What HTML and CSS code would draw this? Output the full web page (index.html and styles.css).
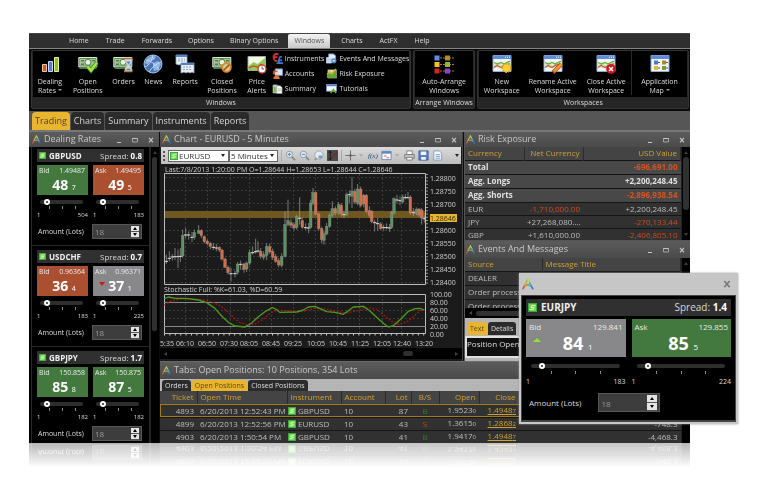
FILE: index.html
```html
<!DOCTYPE html>
<html lang="en">
<head>
<meta charset="utf-8">
<title>Trading workspace</title>
<link rel="stylesheet" href="styles.css">
</head>
<body>
<svg class="sprite" aria-hidden="true">
  <symbol id="logo" viewBox="0 0 10 10"><g fill="none" stroke-width="1.3" stroke-linecap="round"><path stroke="#d9534a" d="M.8 9l1.5-3"/><path stroke="#e9a33a" d="M2.3 6l1-2"/><path stroke="#9bc53d" d="M3.3 4L4.8 1"/><path stroke="#c8cf4a" d="M4.8 1l1.7 3"/><path stroke="#44a5d8" d="M6.5 4l1.2 2.5"/><path stroke="#5166c9" d="M7.7 6.5L9 9"/><path stroke="#cf8a3c" d="M2.5 6.4L5 5.6"/><path stroke="#46b5a5" d="M5 5.6l2.4 1"/></g></symbol>
  <symbol id="chip" viewBox="0 0 9 9"><path fill="#36a833" d="M0 0h9v9H0z"/><path fill="#6fd64e" d="M1 1h7v7H1z"/><path fill="none" stroke="#e9ffe0" stroke-width=".9" d="M7.500 2.500H3.800L3 4.500h3L5.200 6.500H1.500"/></symbol>
  <symbol id="min" viewBox="0 0 6 6"><path fill="none" stroke="currentColor" d="M1 5.500h4"/></symbol>
  <symbol id="max" viewBox="0 0 6 6"><path fill="none" stroke="currentColor" stroke-width=".7" d="M.5 1.500h5v3.500h-5z"/><path stroke="currentColor" d="M.5 1.500h5"/></symbol>
  <symbol id="x" viewBox="0 0 6 6"><path fill="none" stroke="currentColor" stroke-width="1.2" d="M1 .8l4 4.600M5 .8L1 5.400"/></symbol>
  <symbol id="bars" viewBox="0 0 20 20"><path fill="#d8532a" stroke="#f7c4a8" d="M2.500 10.500h4v7h-4z"/><path fill="#4d7fd6" stroke="#c9dcff" d="M8.500 7.500h4v10h-4z"/><path fill="#8fc21e" stroke="#e4f5a0" d="M14.500 3.500h4v14h-4z"/></symbol>
  <symbol id="money" viewBox="0 0 20 20"><path fill="#5d8f55" stroke="#dfe9d6" d="M.8 3.500h18v9.500H.8z"/><path fill="#a8c79c" d="M2 5h15.600v6.600H2z"/><circle cx="10" cy="8.300" r="3" fill="#e8f2df" stroke="#4d7d48"/><path fill="#4d7d48" d="M3 6h3v1.500H3zM14 6h3v1.500h-3zM3 9.500h3V11H3zM1.500 13.500h17V15h-17z"/></symbol>
  <symbol id="check" viewBox="0 0 20 20"><use href="#money"/><path fill="none" stroke="#38861a" stroke-width="4" d="M9.500 12.500l3.500 4 6-8"/><path fill="none" stroke="#9bea3c" stroke-width="2.600" d="M9.500 12.500l3.500 4 6-8"/></symbol>
  <symbol id="hour" viewBox="0 0 20 20"><use href="#money"/><path fill="#bcdcf5" stroke="#e9c489" d="M12 5h7c0 4-2.500 5-2.500 6s2.500 2 2.500 6h-7c0-4 2.500-5 2.500-6S12 9 12 5z"/><path fill="#4a88cc" d="M13.500 7.500h4l-2 3zM13 16c1-2 4-2 5 0z"/><path stroke="#b9733a" stroke-width="1.600" d="M11 4.500h8.500M11 17.500h8.500"/></symbol>
  <symbol id="globe" viewBox="0 0 20 20"><circle cx="10" cy="10" r="9" fill="#4774b5" stroke="#a9c6ec"/><path fill="#8db4e2" d="M4 5c2-3 7-4 9-2l-2 3-4 1-2 4-3-2zM10 9l5-2 3 3-3 6-4 1-1-4z"/><path fill="none" stroke="#d4e5f8" stroke-width=".8" d="M2 13C7 11 9 6 10 1M6 18c3-5 7-8 12-10M3 6c5 1 11 5 13 10"/></symbol>
  <symbol id="reports" viewBox="0 0 20 20"><path fill="#e8eff8" stroke="#93aac6" stroke-width=".8" d="M1 1h11v10l-2-1-2 1-2-1-2 1-3-1z"/><path fill="#4c84c8" d="M1 1h11v2H1z"/><path fill="#e8eff8" stroke="#93aac6" stroke-width=".8" d="M6 9h13v10l-2-1-2 1-2-1-2 1-2-1-3 1z"/><path fill="#4c84c8" d="M6 9h13v2H6z"/><path stroke="#7c8ba0" stroke-width=".8" stroke-dasharray="2 1" d="M3 5h7M3 7h7M8 13h9M8 15.500h9"/></symbol>
  <symbol id="closed" viewBox="0 0 20 20"><use href="#money"/><circle cx="14.500" cy="13.500" r="4.300" fill="#d6c6a0" stroke="#e38818" stroke-width="1.800"/><path stroke="#8f5a18" stroke-width="1.600" d="M11.500 16.500l6-6"/></symbol>
  <symbol id="alerts" viewBox="0 0 20 20"><path fill="#f3fae8" stroke="#9dad92" d="M1 2.500h17.500v14H1z"/><path fill="#91cc59" d="M1.500 12l5-4 4 2 7.500-6v12H1.500z"/><path fill="none" stroke="#d23a25" stroke-width="1.200" d="M1.500 14l5-2 4 1 4-3"/><circle cx="15" cy="15" r="4" fill="#fff" stroke="#d1442b" stroke-width="1.300"/><path fill="none" stroke="#333" stroke-width=".8" d="M15 12.500V15h2"/></symbol>
  <symbol id="instr" viewBox="0 0 12 12"><path fill="none" stroke="#d33620" stroke-width="2" d="M7 1.500C3 0 1 3 2 6s3 3 4 2.500M1 4.500h5"/><path fill="none" stroke="#3f78d2" stroke-width="1.800" d="M11 4.500c-2-1-3 0-3 2s0 3-1.500 4.500H12M6.500 8H11"/></symbol>
  <symbol id="acct" viewBox="0 0 12 12"><path fill="#dbe6f6" stroke="#7896bf" d="M3.500 1h8v7h-8z"/><path fill="#db4a2b" d="M1 3h5v4H1z"/><circle cx="5" cy="6" r="2" fill="#f4d2a2"/><path fill="#e07130" d="M1.500 12c0-5 7-5 7 0z"/></symbol>
  <symbol id="summ" viewBox="0 0 12 12"><path fill="#d5dbe0" stroke="#777" stroke-width=".7" d="M1 2h5v9H1z"/><path fill="#fafafa" stroke="#8c9a8c" stroke-width=".7" d="M5 3h4l2 2v6.500H5z"/><path fill="#6bb43a" d="M2 4h2v6H2z"/><path stroke="#999" stroke-width=".7" d="M6 6.500h4M6 8.500h4"/></symbol>
  <symbol id="evt" viewBox="0 0 12 12"><path fill="#e9f0f7" stroke="#6d9cce" d="M3 1h5l2.500 2v6H3z"/><path fill="#b7d4f0" stroke="#eef" stroke-width=".7" d="M.5 5h7v4.500L6 11H.5z"/><circle cx="8.500" cy="8.500" r="2.800" fill="#4e8fd0"/><path stroke="#fff" d="M7 8.500h3"/></symbol>
  <symbol id="risk" viewBox="0 0 12 12"><path fill="#e7efc2" stroke="#7f9a49" stroke-width=".7" d="M2 2h9.500v9H2z"/><path fill="#67a531" d="M1 11V8l3-3 2 2 5-5v9z"/><path fill="none" stroke="#e4a72a" stroke-width="1.300" d="M1 7l3-3 2 2 5-5"/></symbol>
  <symbol id="tut" viewBox="0 0 12 12"><path fill="#f5f8fc" stroke="#7893c5" stroke-width=".8" d="M.5 1.500h11v7.500H.5z"/><path fill="#5c83cf" d="M.5 1.500h11v2H.5z"/><path fill="none" stroke="#66b32e" stroke-width="1.600" d="M5 11l3-4 3 4"/></symbol>
  <symbol id="arrange" viewBox="0 0 20 20"><path stroke="#b5762b" stroke-dasharray="2 1" d="M6 4h14M6 10.500h14M6 17h14"/><path fill="#5a8ff0" d="M.5 1.500h5v5h-5z"/><path fill="#b38a24" d="M11 1.500h5v5h-5z"/><path fill="#f0c223" d="M.5 8h5v5h-5z"/><path fill="#8dbd22" d="M11 8h5v5h-5z"/><path fill="#d62222" d="M.5 14.500h5v5h-5z"/><path fill="#8b3fe0" d="M11 14.500h5v5h-5z"/></symbol>
  <symbol id="win" viewBox="0 0 20 20"><path fill="#f2f6ef" stroke="#8da9d8" d="M1 1.500h18v16H1z"/><path fill="#5d8cd8" d="M1 1.500h18v3.500H1z"/><path stroke="#fff" d="M13 3.200h1M15 3.200h1M17 3.200h1"/><path fill="#cfe8b4" d="M1.500 11l4-3 4 3 4-2 5-2v4l-9 3-8-1z"/><path fill="none" stroke="#5ca83a" stroke-width="1.200" d="M2 8.500l3.500 1.500L9 8.500l3 1.500 6-3"/><path fill="none" stroke="#d1553b" stroke-width="1.300" d="M2 13.500l3-2 4 2 4-2.500 5-1"/></symbol>
  <symbol id="wnew" viewBox="0 0 20 20"><use href="#win"/><circle cx="14.500" cy="14" r="4.300" fill="#f9d33c" stroke="#d99d16" stroke-width="1.500" stroke-dasharray="2 1"/></symbol>
  <symbol id="wren" viewBox="0 0 20 20"><use href="#win"/><path stroke="#a5501a" stroke-width="4" d="M10 18.500l8.500-8.500"/><path stroke="#f39a2e" stroke-width="2.500" d="M11 17.500l7.500-7.500"/></symbol>
  <symbol id="wclose" viewBox="0 0 20 20"><use href="#win"/><circle cx="15" cy="15" r="4.800" fill="#c9151b"/><path stroke="#fff" stroke-width="1.500" d="M13 13l4 4m0-4l-4 4"/></symbol>
  <symbol id="wmap" viewBox="0 0 20 20"><path fill="#f2f6fb" stroke="#8da9d8" d="M1 1.500h18v16H1z"/><path fill="#5d8cd8" d="M1 1.500h18v3.500H1z"/><path stroke="#555" d="M8 8.500h2M16 8.500h2M8 14h2M16 14h2"/><path fill="#4d79c9" d="M4 6.500h4v4H4z"/><path fill="#a98a2a" d="M12 6.500h4v4h-4z"/><path fill="#e9bb28" d="M4 12h4v4H4z"/><path fill="#7e9f2a" d="M12 12h4v4h-4z"/></symbol>
  <symbol id="zoomi" viewBox="0 0 12 12"><path stroke="#8a8a8a" stroke-width="2" d="M7 7l4 4"/><circle cx="4.800" cy="4.800" r="3.500" fill="#dbe8f3" stroke="#8f9aa5"/><path stroke="#4b86bd" d="M3 4.800h3.600M4.800 3v3.600"/></symbol>
  <symbol id="zoomo" viewBox="0 0 12 12"><path stroke="#8a8a8a" stroke-width="2" d="M7 7l4 4"/><circle cx="4.800" cy="4.800" r="3.500" fill="#dbe8f3" stroke="#8f9aa5"/><path stroke="#4b86bd" d="M3 4.800h3.600"/></symbol>
  <symbol id="page" viewBox="0 0 12 12"><path fill="#f5f9ff" stroke="#7d9dc0" d="M2 1h6l2.500 2.500V11H2z"/><path stroke="#6fa3d8" d="M4 5h5M4 7h5M4 9h5"/></symbol>
  <symbol id="globe2" viewBox="0 0 12 12"><circle cx="6.500" cy="5.500" r="4.500" fill="#e6edf2" stroke="#99a1a9"/><path fill="#6d9cc4" d="M6 6h4v3H6z"/><path stroke="#888" stroke-width="1.500" d="M4 9l-2 2"/></symbol>
  <symbol id="trend" viewBox="0 0 12 12"><path fill="#4a4a4a" d="M0 0h12v12H0z"/><path fill="none" stroke="#111" d="M3.500 1.500v9M2 3l1.500-1.800L5 3M2 9l1.500 1.800L5 9"/><path fill="none" stroke="#7a2525" stroke-width="1.300" d="M5 9l2-3 2-1 2-3"/></symbol>
  <symbol id="cross" viewBox="0 0 12 12"><path stroke="#666" d="M6 .5v11M.5 6h11"/><circle cx="6" cy="6" r="1.500" fill="#666"/></symbol>
  <symbol id="cal" viewBox="0 0 12 12"><path fill="#fff" stroke="#5d87c4" d="M1 1.500h10v9H1z"/><path fill="#5d87c4" d="M1 1.500h10V4H1z"/><path stroke="#c55" d="M3 6.500h3M6 8.500h3"/></symbol>
  <symbol id="print" viewBox="0 0 12 12"><path fill="#fff" stroke="#777" d="M3 1h6v4H3z"/><path fill="#c9c9c9" stroke="#777" d="M.8 5h10.400v4H.8z"/><path fill="#fff" stroke="#777" d="M3 8h6v3H3z"/></symbol>
  <symbol id="save" viewBox="0 0 12 12"><path fill="#5b7fbd" stroke="#3e5f9c" d="M1 1h10v10H1z"/><path fill="#f0f4fa" d="M3 1.500h6v4H3zM3.500 7.500h5v3h-5z"/></symbol>
</svg>

<main class="app">
  <nav class="menu">
    <a href="#">Home</a><a href="#">Trade</a><a href="#">Forwards</a><a href="#">Options</a><a href="#">Binary Options</a><a href="#" class="on">Windows</a><a href="#">Charts</a><a href="#">ActFX</a><a href="#">Help</a>
  </nav>
  <div class="ribbon">
    <section class="group g-windows">
      <div class="tools">
        <button><svg><use href="#bars"/></svg>Dealing<br>Rates <i class="caret"></i></button>
        <button><svg><use href="#check"/></svg>Open<br>Positions</button>
        <button><svg><use href="#hour"/></svg>Orders</button>
        <button><svg><use href="#globe"/></svg>News</button>
        <button><svg><use href="#reports"/></svg>Reports</button>
        <button><svg><use href="#closed"/></svg>Closed<br>Positions</button>
        <button><svg><use href="#alerts"/></svg>Price<br>Alerts</button>
        <div class="list">
          <button><svg><use href="#instr"/></svg>Instruments</button>
          <button><svg><use href="#acct"/></svg>Accounts</button>
          <button><svg><use href="#summ"/></svg>Summary</button>
        </div>
        <div class="list">
          <button><svg><use href="#evt"/></svg>Events And Messages</button>
          <button><svg><use href="#risk"/></svg>Risk Exposure</button>
          <button><svg><use href="#tut"/></svg>Tutorials</button>
        </div>
      </div>
      <h2>Windows</h2>
    </section>
    <section class="group g-arrange">
      <div class="tools"><button><svg><use href="#arrange"/></svg>Auto-Arrange<br>Windows</button></div>
      <h2>Arrange Windows</h2>
    </section>
    <section class="group g-spaces">
      <div class="tools">
        <button><svg><use href="#wnew"/></svg>New<br>Workspace</button>
        <button><svg><use href="#wren"/></svg>Rename Active<br>Workspace</button>
        <button><svg><use href="#wclose"/></svg>Close Active<br>Workspace</button>
        <button class="split"><svg><use href="#wmap"/></svg>Application<br>Map <i class="caret"></i></button>
      </div>
      <h2>Workspaces</h2>
    </section>
  </div>
  <nav class="spaces">
    <a href="#" class="on">Trading</a><a href="#">Charts</a><a href="#">Summary</a><a href="#">Instruments</a><a href="#">Reports</a>
  </nav>

  <div class="desk">
    <section class="panel rates">
      <header class="bar"><svg class="logo"><use href="#logo"/></svg><h3>Dealing Rates</h3><button aria-label="Minimize"><svg><use href="#min"/></svg></button><button aria-label="Maximize"><svg><use href="#max"/></svg></button><button aria-label="Close"><svg><use href="#x"/></svg></button></header>
      <div class="scroller">
        <div class="cards">
          <article class="card">
            <div class="pair"><svg><use href="#chip"/></svg><b>GBPUSD</b><span>Spread: <b>0.8</b></span></div>
            <div class="sides">
              <button class="quote up"><span>Bid</span><span>1.49487</span><strong>48 <small>7</small></strong></button>
              <button class="quote down"><span>Ask</span><span>1.49495</span><strong>49 <small>5</small></strong></button>
              <div class="slide"><input type="range" min="0" max="100" value="12" aria-label="GBPUSD bid size"><div class="ticks"><i></i><i></i><i></i></div><p><span>1</span><span>504</span></p></div>
              <div class="slide"><input type="range" min="0" max="100" value="12" aria-label="GBPUSD ask size"><div class="ticks"><i></i><i></i><i></i></div><p><span>1</span><span>183</span></p></div>
            </div>
            <div class="amount"><label for="a1">Amount (Lots)</label><div class="spin"><input id="a1" type="text" value="18"><button aria-label="More"></button><button aria-label="Less"></button></div></div>
          </article>
          <article class="card">
            <div class="pair"><svg><use href="#chip"/></svg><b>USDCHF</b><span>Spread: <b>0.7</b></span></div>
            <div class="sides">
              <button class="quote down"><span>Bid</span><span>0.96364</span><strong>36 <small>4</small></strong></button>
              <button class="quote flat"><span>Ask</span><span>0.96371</span><strong><i class="fall"></i>37 <small>1</small></strong></button>
              <div class="slide"><input type="range" min="0" max="100" value="12" aria-label="USDCHF bid size"><div class="ticks"><i></i><i></i><i></i></div><p><span>1</span><span>183</span></p></div>
              <div class="slide"><input type="range" min="0" max="100" value="12" aria-label="USDCHF ask size"><div class="ticks"><i></i><i></i><i></i></div><p><span>1</span><span>225</span></p></div>
            </div>
            <div class="amount"><label for="a2">Amount (Lots)</label><div class="spin"><input id="a2" type="text" value="18"><button aria-label="More"></button><button aria-label="Less"></button></div></div>
          </article>
          <article class="card">
            <div class="pair"><svg><use href="#chip"/></svg><b>GBPJPY</b><span>Spread: <b>1.7</b></span></div>
            <div class="sides">
              <button class="quote up"><span>Bid</span><span>150.858</span><strong>85 <small>8</small></strong></button>
              <button class="quote up"><span>Ask</span><span>150.875</span><strong>87 <small>5</small></strong></button>
              <div class="slide"><input type="range" min="0" max="100" value="12" aria-label="GBPJPY bid size"><div class="ticks"><i></i><i></i><i></i></div><p><span>1</span><span>182</span></p></div>
              <div class="slide"><input type="range" min="0" max="100" value="12" aria-label="GBPJPY ask size"><div class="ticks"><i></i><i></i><i></i></div><p><span>1</span><span>182</span></p></div>
            </div>
            <div class="amount"><label for="a3">Amount (Lots)</label><div class="spin"><input id="a3" type="text" value="18"><button aria-label="More"></button><button aria-label="Less"></button></div></div>
          </article>
        </div>
        <div class="vbar"><i class="thumb"></i></div>
      </div>
    </section>

    <section class="panel chart">
      <header class="bar"><svg class="logo"><use href="#logo"/></svg><h3>Chart - EURUSD - 5 Minutes</h3><button aria-label="Minimize"><svg><use href="#min"/></svg></button><button aria-label="Maximize"><svg><use href="#max"/></svg></button><button aria-label="Close"><svg><use href="#x"/></svg></button></header>
      <div class="toolbar">
        <i class="grip"></i>
        <div class="pick pick-sym"><svg><use href="#chip"/></svg><select aria-label="Instrument"><option>EURUSD</option></select></div>
        <div class="pick pick-per"><select aria-label="Period"><option>5 Minutes</option></select></div>
        <i class="rule"></i>
        <button aria-label="Zoom in"><svg><use href="#zoomi"/></svg></button><button aria-label="Zoom out"><svg><use href="#zoomo"/></svg></button><button aria-label="Zoom reset"><svg><use href="#globe2"/></svg></button><button aria-label="Trend line"><svg><use href="#trend"/></svg></button>
        <i class="rule"></i>
        <button aria-label="Crosshair"><svg><use href="#cross"/></svg></button><i class="drop pale"></i>
        <button class="fx">f(x)</button><button aria-label="Calendar"><svg><use href="#cal"/></svg></button><i class="drop pale"></i>
        <button aria-label="Print"><svg><use href="#print"/></svg></button><button aria-label="Save"><svg><use href="#save"/></svg></button><button aria-label="Copy"><svg><use href="#page"/></svg></button>
        <i class="drop last"></i>
      </div>
      <svg class="plot" viewBox="0 0 302 184" preserveAspectRatio="xMinYMin meet">
        <text x="5" y="8">Last:7/8/2013 1:20:00 PM O=1.28644 H=1.28653 L=1.28644 C=1.28646</text>
        <g id="grid"></g>
        <path fill="#6f5720" d="M4 47h262v7H4z"/>
        <g id="candles" transform="translate(-5 -36) scale(.333333)"></g>
        <path class="frame" d="M4.500 120.500V9.500h261v111z"/>
        <path class="frame" d="M4.500 169.500v-39h261v39z"/>
        <path stroke="#888" d="M4 138.500h262M4 162.500h262"/>
        <path stroke="#c9c9c9" stroke-width="2" stroke-dasharray="1 4.400" d="M4 170.500h262"/>
        <path stroke="#999" stroke-width="2" stroke-dasharray="1 2.290" d="M267 10v111"/>
        <g transform="translate(-5 76) scale(.333333)" fill="none" stroke-linejoin="round">
          <path stroke="#b11" stroke-width="4" stroke-dasharray="5 5" d="M28 195L50 182 75 177 110 176 150 181 175 187 200 200 225 222 250 245 275 256 300 252 325 237 345 220 365 210 400 213 430 215 455 211 480 205 510 206 540 213 570 219 600 214 640 203 665 208 690 228 710 245 730 253 755 246 775 230 795 212 808 209"/>
          <path stroke="#4e9a1c" stroke-width="4" d="M28 176L40 171 60 175 92 175 130 180 155 188 180 205 200 228 220 247 240 258 270 261 290 249 310 230 330 215 352 203 362 207 374 217 425 216 445 210 460 201 480 199 495 206 515 215 540 217 565 223 580 212 595 201 625 199 645 213 665 232 685 250 700 261 715 257 740 235 760 214 780 206 795 205 808 210"/>
        </g>
        <text x="4" y="128">Stochastic Full: %K=61.03, %D=60.59</text>
        <rect x="270" y="50" width="27" height="8" fill="#e8b530"/>
        <g>
          <text x="270" y="17">1.28800</text><text x="270" y="30">1.28750</text><text x="270" y="43">1.28700</text><text x="270" y="57" class="dark">1.28646</text><text x="270" y="69">1.28600</text><text x="270" y="82">1.28550</text><text x="270" y="95">1.28500</text><text x="270" y="108">1.28450</text><text x="270" y="121">1.28400</text>
          <text x="270" y="133">100.00</text><text x="270" y="141">80.00</text><text x="270" y="149">60.00</text><text x="270" y="157">40.00</text><text x="270" y="165">20.00</text><text x="270" y="173">0.00</text>
        </g>
        <g class="mid">
          <text x="7" y="182">5:35</text><text x="25" y="182">06:10</text><text x="47" y="182">06:50</text><text x="69" y="182">07:30</text><text x="89" y="182">08:05</text><text x="111" y="182">08:45</text><text x="133" y="182">09:25</text><text x="156" y="182">10:05</text><text x="178" y="182">10:45</text><text x="200" y="182">11:25</text><text x="222" y="182">12:05</text><text x="242" y="182">12:40</text><text x="264" y="182">13:20</text>
        </g>
      </svg>
      <div class="hbar"><i class="left"></i><i class="thumb"></i><i class="right"></i></div>
    </section>

    <div class="side">
      <section class="panel risk">
        <header class="bar"><svg class="logo"><use href="#logo"/></svg><h3>Risk Exposure</h3><button aria-label="Minimize"><svg><use href="#min"/></svg></button><button aria-label="Maximize"><svg><use href="#max"/></svg></button><button aria-label="Close"><svg><use href="#x"/></svg></button></header>
        <div class="scroller">
          <table>
            <thead><tr><th>Currency</th><th class="num">Net Currency</th><th class="num">USD Value</th></tr></thead>
            <tbody>
              <tr class="sum"><td>Total</td><td></td><td class="num neg">-696,691.00</td></tr>
              <tr class="sum"><td>Agg. Longs</td><td></td><td class="num">+2,200,248.45</td></tr>
              <tr class="sum"><td>Agg. Shorts</td><td></td><td class="num neg">-2,896,938.54</td></tr>
              <tr><td>EUR</td><td class="num neg">-1,710,000.00</td><td class="num">+2,200,248.45</td></tr>
              <tr><td>JPY</td><td class="num">+27,268,080....</td><td class="num neg">-270,133.44</td></tr>
              <tr><td>GBP</td><td class="num">+1,610,000.00</td><td class="num neg">-2,406,805.10</td></tr>
            </tbody>
          </table>
          <div class="vbar ends"><i class="thumb"></i></div>
        </div>
      </section>
      <section class="panel events">
        <header class="bar"><svg class="logo"><use href="#logo"/></svg><h3>Events And Messages</h3><button aria-label="Minimize"><svg><use href="#min"/></svg></button><button aria-label="Maximize"><svg><use href="#max"/></svg></button><button aria-label="Close"><svg><use href="#x"/></svg></button></header>
        <div class="scroller">
          <table>
            <thead><tr><th>Source</th><th>Message Title</th></tr></thead>
            <tbody><tr><td>DEALER</td><td></td></tr><tr><td>Order process</td><td></td></tr><tr><td>Order process</td><td></td></tr></tbody>
          </table>
          <div class="vbar ends"></div>
        </div>
        <div class="hbar"><i class="left"></i><i class="thumb"></i></div>
        <div class="detail">
          <nav class="tabs"><a href="#" class="on">Text</a><a href="#">Details</a></nav>
          <p>Position Open</p>
        </div>
      </section>
    </div>

    <section class="panel positions">
      <header class="bar"><svg class="logo"><use href="#logo"/></svg><h3>Tabs: Open Positions: 10 Positions, 354 Lots</h3></header>
      <nav class="tabs"><a href="#">Orders</a><a href="#" class="on">Open Positions</a><a href="#">Closed Positions</a></nav>
      <div class="scroller">
        <table>
          <colgroup><col class="c-tk"><col class="c-ot"><col class="c-in"><col class="c-ac"><col class="c-lt"><col class="c-bs"><col class="c-op"><col class="c-op"><col></colgroup>
          <thead><tr><th class="num">Ticket</th><th>Open Time</th><th>Instrument</th><th>Account</th><th class="num">Lot</th><th class="mid">B/S</th><th class="num">Open</th><th class="num">Close</th><th></th></tr></thead>
          <tbody>
            <tr class="sel"><td class="num">4893</td><td>6/20/2013 12:52:43 PM</td><td><svg><use href="#chip"/></svg>GBPUSD</td><td>10</td><td class="num">87</td><td class="mid buy">B</td><td class="num">1.9523<small>0</small></td><td class="num"><a href="#">1.4948<small>7</small></a></td><td></td></tr>
            <tr><td class="num">4899</td><td>6/20/2013 12:52:56 PM</td><td><svg><use href="#chip"/></svg>EURUSD</td><td>10</td><td class="num">43</td><td class="mid sell">S</td><td class="num">1.3615<small>0</small></td><td class="num"><a href="#">1.2868<small>2</small></a></td><td class="num">-748.3</td></tr>
            <tr><td class="num">4903</td><td>6/20/2013 1:50:54 PM</td><td><svg><use href="#chip"/></svg>GBPUSD</td><td>10</td><td class="num">41</td><td class="mid buy">B</td><td class="num">1.9417<small>0</small></td><td class="num"><a href="#">1.4948<small>7</small></a></td><td class="num">-4,468.3</td></tr>
          </tbody>
        </table>
        <div class="vbar"></div>
      </div>
    </section>
  </div>
</main>

<aside class="popup">
  <header><svg><use href="#logo"/></svg><button aria-label="Close"><svg><use href="#x"/></svg></button></header>
  <article class="card big">
    <div class="pair"><svg><use href="#chip"/></svg><b>EURJPY</b><span>Spread: <b>1.4</b></span></div>
    <div class="sides">
      <button class="quote flat"><span>Bid</span><span>129.841</span><strong><i class="rise"></i>84 <small>1</small></strong></button>
      <button class="quote up"><span>Ask</span><span>129.855</span><strong>85 <small>5</small></strong></button>
      <div class="slide"><input type="range" min="0" max="100" value="10" aria-label="EURJPY bid size"><div class="ticks"><i></i><i></i><i></i></div><p><span>1</span><span>183</span></p></div>
      <div class="slide"><input type="range" min="0" max="100" value="10" aria-label="EURJPY ask size"><div class="ticks"><i></i><i></i><i></i></div><p><span>1</span><span>224</span></p></div>
    </div>
    <div class="amount"><label for="a4">Amount (Lots)</label><div class="spin"><input id="a4" type="text" value="18"><button aria-label="More"></button><button aria-label="Less"></button></div></div>
  </article>
</aside>
<script src="chart.js"></script>
</body>
</html>
```
FILE: chart.js
```js
// Each candle: x, body top, body bottom, direction (u/d), high, low.
const candles = [
  [34,396,400,'d',380,408],[43,388,391,'u',370,400],[52,384,387,'u',378,398],[60,384,386,'d',360,396],[69,383,386,'d',365,420],[76,383,385,'u',360,402],
  [83,322,384,'u',305,390],[92,318,321,'u',300,330],[101,318,321,'d',310,335],[111,325,328,'d',312,342],[118,314,328,'u',305,335],[131,308,316,'u',291,318],
  [139,308,323,'d',304,330],[148,326,341,'d',322,346],[157,339,347,'d',335,352],[166,346,355,'d',342,364],[175,354,358,'d',345,366],[184,355,360,'d',348,370],
  [193,358,366,'d',355,372],[201,366,393,'d',362,398],[210,393,418,'d',389,420],[219,418,434,'d',412,440],[228,433,437,'d',420,461],[240,434,437,'u',428,448],
  [248,408,433,'u',402,440],[257,406,409,'d',398,425],[267,408,424,'d',404,434],[275,405,423,'u',400,432],[284,374,405,'u',364,412],[293,369,374,'u',355,380],
  [302,368,371,'u',332,377],[309,366,369,'d',340,374],[317,370,385,'d',360,392],[326,380,388,'u',370,396],[335,356,382,'u',346,396],[344,356,372,'d',348,378],
  [353,370,388,'d',362,396],[362,386,400,'d',378,405],[371,398,411,'d',390,418],[380,386,412,'u',376,418],[390,290,385,'u',250,388],[399,278,290,'u',215,295],
  [408,284,292,'d',272,300],[417,290,300,'d',284,306],[425,266,298,'u',260,305],[434,266,271,'d',208,290],[442,278,298,'d',268,302],[452,296,299,'d',286,306],
  [461,297,300,'u',285,315],[467,225,298,'u',215,302],[474,194,226,'u',180,232],[482,194,258,'d',190,262],[491,258,302,'d',254,308],[500,302,335,'d',296,345],
  [507,317,337,'u',308,350],[515,295,318,'u',285,322],[524,262,295,'u',256,300],[532,242,262,'u',220,268],[541,242,255,'d',235,262],[551,230,256,'u',222,260],
  [559,232,258,'d',226,266],[567,255,260,'d',248,270],[575,200,260,'u',194,264],[583,196,200,'u',188,225],[591,190,205,'u',148,240],[600,190,222,'d',182,228],
  [608,183,226,'u',168,232],[617,183,232,'d',176,238],[626,202,228,'d',198,238],[634,202,250,'d',198,256],[643,248,262,'d',235,268],[650,250,281,'d',246,286],
  [659,281,284,'d',275,310],[668,284,287,'d',270,308],[677,288,302,'d',282,306],[686,296,299,'u',290,308],[695,296,299,'u',286,304],[704,297,300,'d',288,312],
  [710,253,298,'u',248,302],[717,212,255,'u',208,260],[726,212,216,'d',200,226],[735,214,218,'d',205,232],[743,207,222,'u',200,226],[751,206,209,'u',198,214],
  [759,206,209,'d',192,214],[766,207,255,'d',202,260],[775,250,254,'d',240,264],[784,244,257,'u',238,262],[792,243,261,'d',240,266],[800,246,270,'d',240,290],
  [808,269,272,'d',262,284]
];
const fill = { u: '#5a9360', d: '#dc6a42' };
document.getElementById('candles').innerHTML = candles.map(([x, t, b, dir, hi, lo]) =>
  `<path stroke="#a8a8a8" stroke-width="2" d="M${x} ${hi}V${lo}"/>` +
  (b - t < 6
    ? `<path stroke="#ddd" stroke-width="3" d="M${x - 5} ${b}h10"/>`
    : `<rect x="${x - 4}" y="${t}" width="8" height="${b - t}" fill="${fill[dir]}" stroke="#999" stroke-width="1"/>`)
).join('');

const columns = [25, 47, 70, 89, 111, 133, 155, 177, 199, 222, 241];
const rows = [13, 26, 39, 66, 79, 92, 105, 118];
const lines = columns.map(x => `M${x}.5 10V120M${x}.5 131V169`)
  .concat(rows.map(y => `M5 ${y}.5H265`), ['M5 146.500H265', 'M5 154.500H265']);
document.getElementById('grid').innerHTML =
  `<path stroke="#3d3d3d" stroke-dasharray="2 2" d="${lines.join('')}"/>`;
```
FILE: styles.css
```css
* { box-sizing: border-box; margin: 0; padding: 0; }
body { position: relative; min-height: 100vh; padding: 33px 78px 0 29px; background: #fff; font: 7px/9px "Open Sans", "Noto Sans", sans-serif; color: #dcdcdc; }
button, input, select { font: inherit; color: inherit; background: none; border: 0; border-radius: 0; }
a { color: inherit; text-decoration: none; }
h2, h3 { font-weight: 400; }
i { font-style: normal; }
svg { display: block; flex: none; }
.sprite { position: absolute; width: 0; height: 0; }

.app { background: #1c1c1c; -webkit-box-reflect: below 0px linear-gradient(to bottom, transparent 0%, transparent 94%, rgba(0, 0, 0, .28) 100%); }

/* Menu */
.menu { display: flex; align-items: flex-end; height: 16px; padding-left: 34px; background: #2f2f2f; border-bottom: 1px solid #858585; border-top: 1px solid #444; white-space: nowrap; }
.menu a { padding: 0 6px; margin-right: 5px; line-height: 14px; }
.menu a:nth-child(n+3):nth-child(-n+5) { margin-right: 4px; }
.menu .on { background: linear-gradient(#f4f4f4, #c8c8c8); color: #555; border-radius: 2px 2px 0 0; }

/* Ribbon */
.ribbon { display: flex; gap: 2px; padding: 1px 1px 2px 2px; background: #0b0b0b; }
.group { border: 1px solid #333; border-radius: 2px; background: #262626; }
.g-windows { flex: 382 1 0; }
.g-arrange { flex: 61 1 0; }
.g-spaces { flex: 212 1 0; }
.group h2 { font-size: 7px; line-height: 11px; text-align: center; white-space: nowrap; }
.tools { display: grid; height: 46px; margin: 0 1px; background: #000; }
.g-windows .tools { grid-template-columns: 34fr 42fr 30fr 30fr 34fr 40fr 30fr 55fr 83fr; }
.g-spaces .tools { grid-template-columns: 46fr 58fr 51fr 57fr; }
.tools button { min-width: 0; white-space: nowrap; display: block; text-align: center; align-self: start; padding-top: 3px; }
.tools > button > svg { width: 20px; height: 20px; margin: 0 auto 3px; }
.split { border-left: 1px solid #2a2a2a; }
.caret { display: inline-block; border: 2px solid transparent; border-top-color: #999; border-bottom: 0; vertical-align: 2px; }
.list { display: grid; grid-auto-rows: 15px; }
.tools .list button { display: flex; align-items: center; gap: 2px; padding: 0; height: 15px; }
.list svg { width: 11px; height: 11px; }

/* Workspace tabs */
.spaces { display: flex; gap: 1px; height: 21px; padding: 1px 0 0 3px; background: #565656; border-bottom: 2px solid #777; }
.spaces a { padding: 0 3px; background: #2b2b2b; color: #d6d6d6; border-radius: 4px 4px 0 0; font-size: 9px; line-height: 18px; }
.spaces .on { background: #e9b52e; color: #4b4436; }

/* Panels */
.desk { display: grid; grid-template-columns: 130px minmax(0, 1fr) 226px; grid-template-rows: 229px 82px; column-gap: 1px; background: #0c0c0c; }
.panel { overflow: hidden; background: #000; }
.bar { display: flex; align-items: center; height: 15px; padding: 0 4px 0 2px; background: linear-gradient(#5c5c5c, #4a4a4a); }
.bar h3 { flex: 1; font-size: 9px; line-height: 13px; padding-bottom: 2px; color: #c8c8c8; white-space: nowrap; }
.bar .logo { width: 9px; height: 9px; margin-right: 3px; }
.bar button { padding: 0 5px; color: #c4c4c4; }
.bar button svg { width: 6px; height: 6px; }
.bar button:last-child { padding-right: 1px; }
.scroller { display: flex; }
.vbar { position: relative; flex: none; width: 9px; background: #000; border-left: 1px solid #222; padding: 10px 1px; }
.vbar::before, .vbar.ends::after { content: ""; position: absolute; left: 2px; top: 4px; border: 2px solid transparent; border-bottom: 3px solid #3c3c3c; border-top: 0; }
.vbar.ends::after { top: auto; bottom: 4px; border-top: 3px solid #3c3c3c; border-bottom: 0; }
.thumb { display: block; background: #303030; border-radius: 3px; }

/* Dealing rates */
.rates { grid-row: 1 / 3; }
.rates .bar { padding-left: 3px; }
.rates .scroller { height: 296px; }
.cards { flex: 1; padding-left: 2px; }
.card { padding: 2px 5px 0; height: 101px; border: 1px solid #282828; border-top: 0; background: #000; }
.card:nth-child(n+2) { padding-top: 4px; }
.card:first-child { height: 99px; }
.rates .vbar .thumb { height: 174px; width: 5px; }
.pair { display: flex; align-items: center; height: 13px; padding: 0 2px; background: #303030; font-size: 8px; color: #d6d6d6; white-space: nowrap; }
.pair > svg { width: 7px; height: 7px; margin-right: 3px; }
.pair > b { flex: 1; color: #eee; }
.pair span b { color: #fff; }
.sides { display: grid; grid-template-columns: 1fr 1fr; column-gap: 5px; }
.quote { display: flex; flex-wrap: wrap; justify-content: space-between; align-content: flex-start; height: 30px; margin-top: 3px; padding: 2px 3px 0 2px; color: #e8e8e8; line-height: 8px; }
.up { background: #43783f; }
.down { background: #aa5030; }
.flat { background: #88888a; }
.quote strong { position: relative; width: 100%; font-size: 14px; line-height: 20px; color: #fff; padding-left: 4px; }
.quote small { font-size: 7px; font-weight: 400; }
.rise, .fall { position: absolute; left: 4px; top: 6px; border: 3px solid transparent; border-top: 4px solid #d01818; border-bottom: 0; }
.rise { border-top: 0; border-bottom: 4px solid #8de62c; }
.slide { padding-top: 4px; }
.slide input { display: block; appearance: none; width: calc(100% - 8px); height: 6px; margin: 0 3px; }
.slide input::-webkit-slider-runnable-track { height: 4px; border-radius: 2px; background: #2e2e2e; }
.slide input::-webkit-slider-thumb { appearance: none; width: 6px; height: 6px; margin-top: -1px; border: 2px solid #fff; border-radius: 50%; background: #223; }
.ticks { display: flex; justify-content: space-between; height: 3px; margin: 1px 24%; }
.ticks i { width: 1px; background: #888; }
.slide p { display: flex; justify-content: space-between; line-height: 8px; font-size: 6px; margin-top: 2px; }
.amount { display: flex; justify-content: space-between; align-items: center; padding: 5px 2px 0 1px; }
.amount label { white-space: nowrap; }
.spin { display: grid; grid-template: 6px 6px / 1fr 8px; width: 50px; height: 15px; padding: 1px 2px 2px 0; background: #3d3d3d; border: 1px solid #565656; }
.spin input { grid-row: 1 / 3; width: 100%; height: 11px; min-width: 0; padding-left: 2px; font-size: 8px; line-height: 11px; color: #999; }
.spin button { position: relative; background: #e4e4e4; border-bottom: 1px solid #555; }
.spin button::after { content: ""; position: absolute; left: 2px; top: 1px; border: 2px solid transparent; border-bottom: 3px solid #000; border-top: 0; }
.spin button:last-child::after { border-top: 3px solid #000; border-bottom: 0; }

/* Chart */
.chart { display: flex; flex-direction: column; background: #1b1b1b; border-right: 1px solid #444; }
.toolbar { display: flex; align-items: center; gap: 3px; height: 17px; margin: 0 1px; padding-left: 2px; background: linear-gradient(#dadada, #bdbdbd); }
.toolbar button svg { width: 11px; height: 11px; }
.grip { width: 2px; height: 10px; border-left: 2px dotted #555; }
.rule { width: 1px; height: 11px; background: #aaa; }
.pick { position: relative; display: flex; align-items: center; height: 12px; background: #fff; border: 1px solid #666; color: #333; }
.pick svg { width: 8px; height: 8px; margin-left: 1px; }
.pick select { flex: 1; min-width: 0; appearance: none; font-size: 8px; line-height: 10px; padding-left: 1px; }
.pick::after, .drop { content: ""; border: 2px solid transparent; border-top: 3px solid #222; border-bottom: 0; margin-right: 3px; }
.pick-sym { width: 61px; margin-right: -3px; }
.pick-per { width: 49px; }
.drop.pale { border-top-color: #aaa; margin-right: 2px; }
.drop.last { margin-left: auto; margin-right: 2px; }
.fx { font: italic 7px/10px "Liberation Serif", serif; color: #234a7c; }
.plot { width: 100%; height: 184px; }
.plot text { font-size: 7px; fill: #cfcfcf; }
.plot .dark { fill: #3a2e10; }
.plot .mid text { text-anchor: middle; }
.frame { fill: none; stroke: #bdbdbd; }
.hbar { position: relative; display: flex; align-items: center; height: 11px; background: #000; padding: 0 4px; }
.hbar .left, .hbar .right { border: 2px solid transparent; border-right: 3px solid #444; border-left: 0; }
.hbar .right { border-left: 3px solid #444; border-right: 0; }
.hbar .thumb { width: 10px; height: 5px; margin: 0 42px 0 auto; }

/* Tables */
table { flex: 1; width: 100%; table-layout: fixed; border-collapse: collapse; background: #313131; font-size: 8px; line-height: 10px; }
th { font-weight: 400; text-align: left; color: #cfa032; background: #444; border-right: 1px solid #2a2a2a; height: 13px; }
td { color: #bdbdbd; border-top: 1px solid #151515; height: 13px; }
th, td { padding: 0 3px; white-space: nowrap; overflow: hidden; }
.num { text-align: right; }
.mid { text-align: center; }
.neg { color: #cf4c1c; }
.side { display: grid; grid-template-rows: 109px 120px; min-width: 0; }
.side .panel { border-left: 1px solid #555; }
.risk { border-bottom: 1px solid #555; }
.side .scroller { overflow: hidden; }
.side .bar { padding-left: 1px; }
.risk .scroller { height: 93px; }
.risk th:nth-child(1) { width: 59px; }
.risk th:nth-child(2) { width: 59px; }
.sum td { background: #484848; color: #e0e0e0; font-weight: 700; height: 14px; }
.sum .neg { color: #d9531e; }
.risk .thumb { height: 53px; }
.events { display: flex; flex-direction: column; }
.events .bar { height: 17px; }
.events .scroller { height: 50px; }
.events th:first-child { width: 77px; }
.events .scroller td { height: 14px; }
.events .hbar { height: 10px; }
.events .hbar .thumb { flex: 1; margin: 0 0 0 4px; }
.detail { flex: 1; display: flex; flex-direction: column; background: #b5b5b5; }
.tabs { display: flex; align-items: flex-end; gap: 1px; padding: 0 2px; height: 12px; background: #b5b5b5; line-height: 11px; }
.tabs a { background: #2b2b2b; color: #ddd; border-radius: 3px 3px 0 0; padding: 0 3px; }
.tabs .on { background: #e9b52e; color: #5a4a18; }
.events .tabs { height: 18px; line-height: 13px; align-items: flex-end; padding-bottom: 1px; }
.detail p { flex: 1; margin: 0 0 3px; background: #101010; border: 2px solid #e0e0e0; font-size: 8px; line-height: 11px; }

/* Positions */
.positions { grid-column: 2 / 4; }
.positions .bar { height: 18px; border-top: 1px solid #6a6a6a; }
.positions td svg { float: left; width: 8px; height: 8px; margin: 1px 2px 0 -2px; }
.positions .vbar::before { display: none; }
.positions small { font-size: 6px; }
.positions td a { color: #cfa032; text-decoration: underline; }
.positions .sel { outline: 1px solid #a07a1c; outline-offset: -1px; }
.c-tk { width: 37px; } .c-ot { width: 90px; } .c-in { width: 54px; } .c-ac { width: 44px; }
.c-lt { width: 26px; } .c-bs { width: 28px; } .c-op { width: 40px; }
.buy { color: #3f7a22; }
.sell { color: #c4451c; }

/* Floating quote window */
.popup { position: absolute; top: 273px; right: 30px; width: 219px; background: #000; border: 2px solid #c8c8c8; border-top: 0; box-shadow: 0 0 2px #999; }
.popup header { display: flex; justify-content: space-between; align-items: center; height: 22px; margin: 0 -2px; padding: 0 7px 0 3px; background: #c6c6c6; color: #777; }
.popup header svg { width: 12px; height: 12px; }
.popup header button svg { width: 8px; height: 8px; }
.card.big { height: auto; padding: 3px 4px 8px; border: 1px solid #444; border-width: 1px 1px 2px; font-size: 8px; }
.big .pair { height: 17px; font-size: 10px; padding: 0 4px 0 2px; }
.big .pair > svg { width: 9px; height: 9px; margin-right: 4px; }
.big .quote { height: 38px; padding: 4px 3px 0; }
.big .quote strong { font-size: 18px; line-height: 24px; padding-left: 4px; }
.big .quote small { font-size: 8px; }
.big .rise { left: 4px; top: 7px; border-width: 0 4px 4px; }
.big .slide { padding-top: 6px; }
.big .slide input { margin: 0 5px; width: calc(100% - 11px); }
.big .slide p { font-size: 7px; margin-top: 4px; }
.big .ticks { margin: 2px 25% 1px; }
.big .amount { justify-content: flex-start; gap: 17px; padding: 7px 3px 0; }
.big .spin { width: 62px; height: 19px; grid-template: 8px 8px / 1fr 10px; }
.big .spin input { height: 16px; }
.big .spin button::after { left: 3px; top: 2px; }
.big .sides { column-gap: 6px; }
```
